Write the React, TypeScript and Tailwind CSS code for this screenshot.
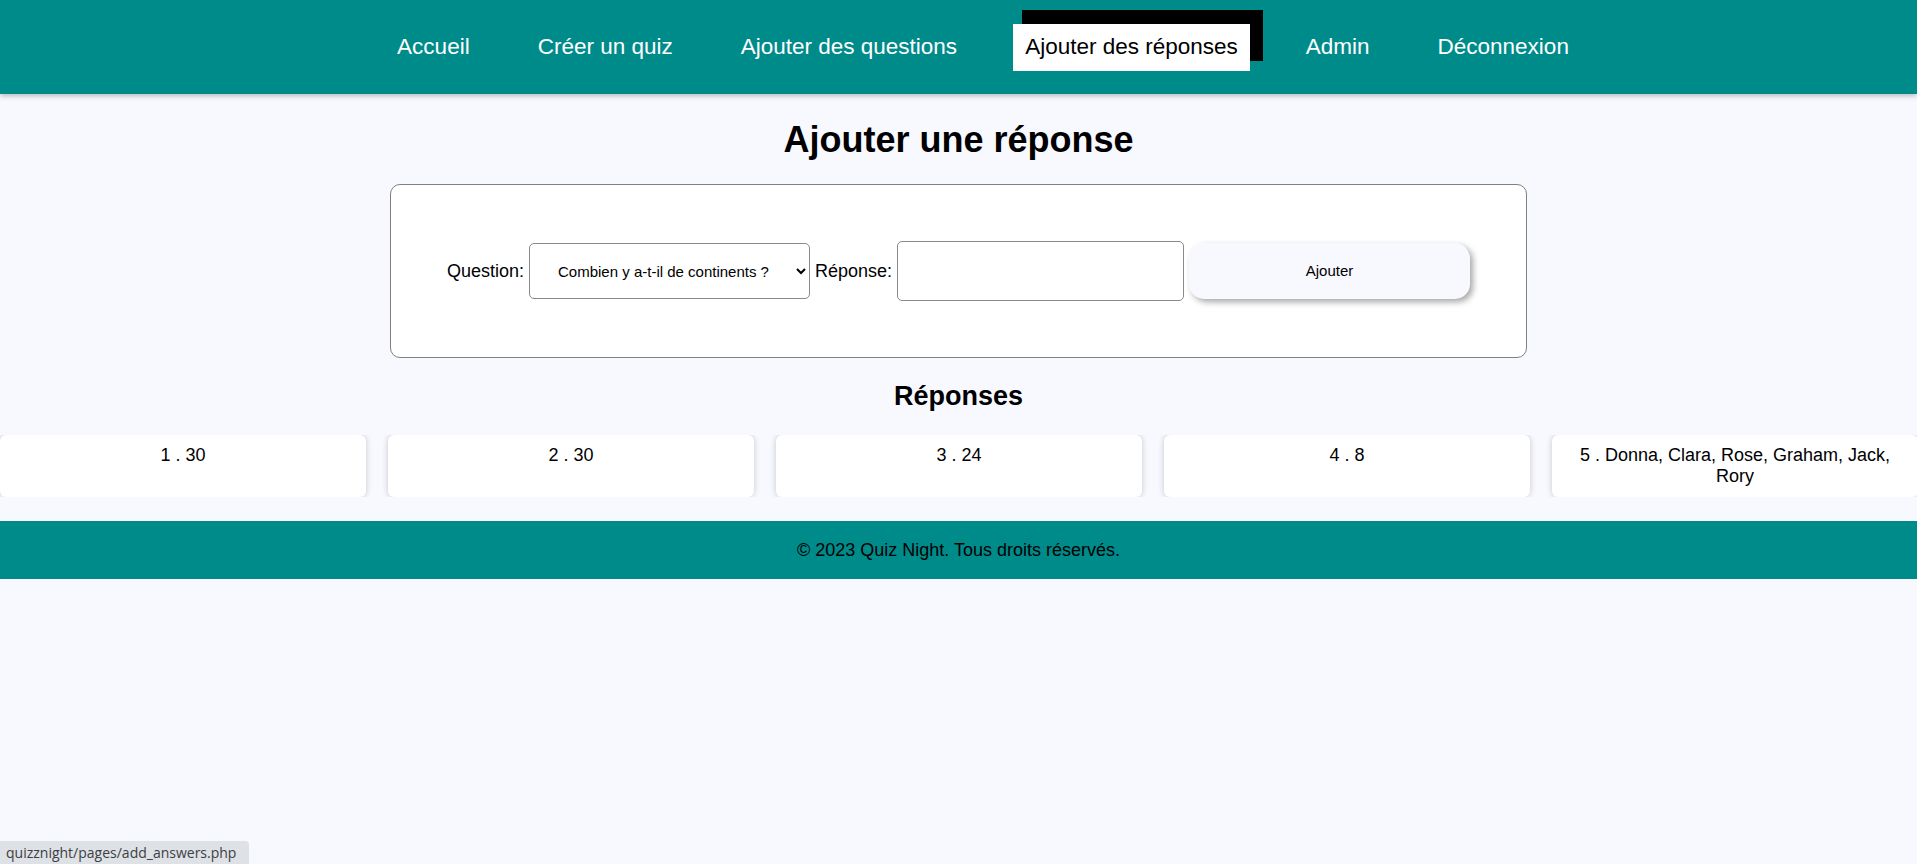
const navLinks = [
  { label: "Accueil" },
  { label: "Créer un quiz" },
  { label: "Ajouter des questions" },
  { label: "Ajouter des réponses", active: true },
  { label: "Admin" },
  { label: "Déconnexion" },
];

const answers = ["30", "30", "24", "8", "Donna, Clara, Rose, Graham, Jack, Rory"];

function Header() {
  return (
    <header className="relative z-10 flex h-[94px] items-center justify-center bg-[#008b8b] pl-[49px] shadow-[0_2px_5px_rgba(0,0,0,0.25)]">
      <nav className="flex items-center gap-[44px]">
        {navLinks.map((link) =>
          link.active ? (
            <a
              key={link.label}
              className="bg-white px-3 py-[10.5px] text-[22.5px] leading-[26px] text-black shadow-[11px_-12px_0_2px_#000]"
            >
              {link.label}
            </a>
          ) : (
            <a key={link.label} className="px-3 py-[10.5px] text-[22.5px] leading-[26px] text-white">
              {link.label}
            </a>
          )
        )}
      </nav>
    </header>
  );
}

function AnswerForm() {
  return (
    <div className="mx-auto flex h-[174px] w-[1137px] items-center justify-center rounded-[10px] border border-[#808080] bg-white">
      <form className="flex items-center gap-[5px] text-[18px]">
        <label>Question:</label>
        <select className="h-[56px] w-[281px] rounded-[5px] border border-[#8a8a8a] bg-white px-[10px] text-center text-[15px] [text-align-last:center]">
          <option>Combien y a-t-il de continents ?</option>
        </select>
        <label>Réponse:</label>
        <input className="h-[60px] w-[287px] rounded-[5px] border border-[#8a8a8a] bg-white px-2" />
        <button
          type="button"
          className="h-[56px] w-[281px] rounded-[15px] bg-[#f8f8ff] text-[15px] shadow-[3px_3px_6px_rgba(0,0,0,0.35)]"
        >
          Ajouter
        </button>
      </form>
    </div>
  );
}

export default function App() {
  return (
    <div className="relative min-h-screen bg-[#f8f8ff] font-['Liberation_Sans',Arial,sans-serif] text-[18px] text-black">
      <Header />
      <h1 className="mt-[25px] mb-[24px] text-center text-[36px] font-bold leading-[41px]">Ajouter une réponse</h1>
      <AnswerForm />
      <h2 className="mt-[23px] mb-[23px] text-center text-[27px] font-bold leading-[31px]">Réponses</h2>
      <div className="flex gap-[22px] overflow-hidden">
        {answers.map((a, i) => (
          <div
            key={i}
            className="w-[366px] shrink-0 rounded-[6px] bg-white p-[10px] text-center leading-[21px] shadow-[0_0_6px_rgba(0,0,0,0.2)]"
          >
            {i + 1} . {a}
          </div>
        ))}
      </div>
      <footer className="mt-[24px] bg-[#008b8b] pt-[19px] pb-[18px] text-center leading-[21px]">
        © 2023 Quiz Night. Tous droits réservés.
      </footer>
      <div className="fixed bottom-0 left-0 flex h-[23px] w-[249px] items-center rounded-tr-[4px] bg-[#dee1e6] pl-[6px] font-['Open_Sans',sans-serif] text-[14px] text-[#3c4043]">
        quizznight/pages/add_answers.php
      </div>
    </div>
  );
}
